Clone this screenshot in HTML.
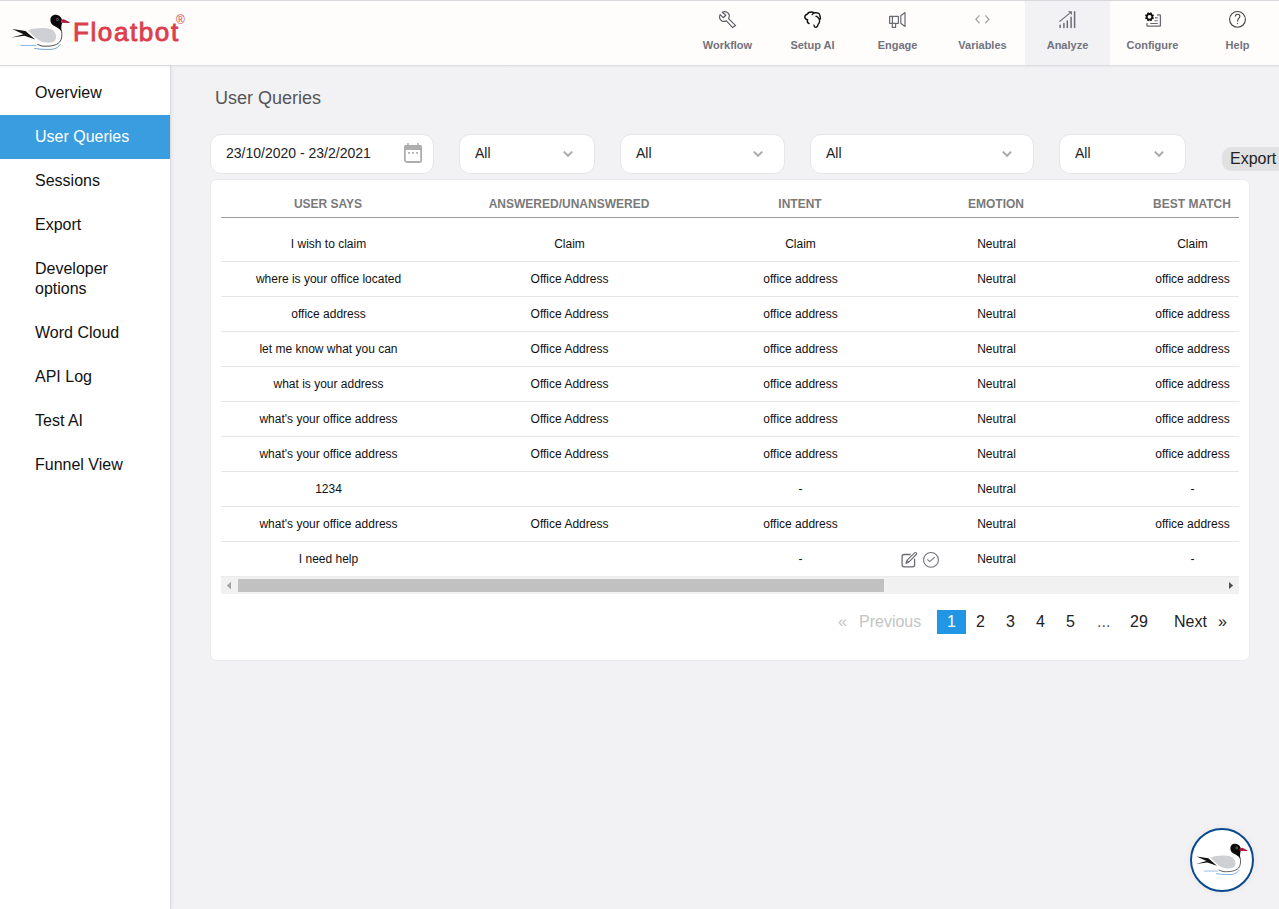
<!DOCTYPE html>
<html><head><meta charset="utf-8">
<style>
*{margin:0;padding:0;box-sizing:border-box}
html,body{width:1279px;height:909px;overflow:hidden;background:#f2f2f5;font-family:"Liberation Sans",sans-serif;color:#222}
.abs{position:absolute}
#topline{left:0;top:0;width:1279px;height:1px;background:#d8d8dc}
#header{left:0;top:1px;width:1279px;height:65px;background:#fefdfc;border-bottom:1px solid #dedee2}
#brand{left:73px;top:17px;font-size:26px;color:#dc3f4c;-webkit-text-stroke:0.9px #dc3f4c;letter-spacing:1.6px}
#reg{left:176px;top:13px;font-size:12px;color:#dc3f4c}
.nav{top:1px;width:85px;height:64px;text-align:center}
.nav.active{background:#f0f0f3}
.nav .lbl{position:absolute;left:0;right:0;top:38px;font-size:11px;font-weight:bold;color:#72727c}
.nav svg{position:absolute;left:34px;top:9px}
#sidebar{left:0;top:66px;width:171px;height:843px;background:#fff;border-right:1px solid #dcdce0;box-shadow:1px 0 3px rgba(0,0,0,0.05);padding-top:1px}
.si{position:absolute;left:0;width:170px;height:44px;font-size:16px;color:#111;padding-left:35px;line-height:44px}
.si.active{background:#3a9de0;color:#fff}
#title{left:215px;top:88px;font-size:18px;color:#555}
.box{position:absolute;top:134px;height:40px;background:#fff;border:1px solid #e6e6e8;border-radius:11px;font-size:14px;color:#222;line-height:36px;padding-left:15px}
.chev{position:absolute;top:14px;width:8px;height:8px;border-right:1.5px solid #999;border-bottom:1.5px solid #999;transform:rotate(45deg)}
#export{left:1222px;top:147px;width:70px;height:24px;background:#e1e1e2;border-radius:9px;font-size:16px;line-height:23px;padding-left:8px;color:#222}
#card{left:210px;top:179px;width:1040px;height:482px;background:#fff;border:1px solid #ececee;border-radius:7px}
.th{position:absolute;top:197px;font-size:12px;font-weight:bold;color:#7a7a7a;text-align:center;width:300px}
#hline{left:221px;top:217px;width:1018px;height:1px;background:#9c9c9c}
.rl{position:absolute;left:221px;width:1018px;height:1px;background:#e6e6e6}
.td{position:absolute;font-size:12px;color:#111;text-align:center;width:300px}
#sb{left:221px;top:576px;width:1018px;height:18px;background:#f1f1f1;border-top:1px solid #ebebeb}
#thumb{left:238px;top:579px;width:646px;height:13px;background:#c1c1c1}
.pg{position:absolute;top:611px;font-size:16px;color:#222;line-height:22px}
#bubble{left:1190px;top:828px;width:64px;height:64px;border-radius:50%;border:2.5px solid #0b4a8c;background:#fff;box-shadow:0 0 8px rgba(0,0,0,0.05)}
</style></head><body>
<div id="topline" class="abs"></div>
<div id="header" class="abs"></div>
<!-- logo bird -->
<svg class="abs" style="left:0;top:0" width="80" height="60" viewBox="0 0 80 60">
<g id="bird">
  <path d="M28 30.5 C33 27.8 45 27.3 51 29.3 C56.5 31.5 57 37.5 55 40.5 C52.5 43.5 46 43 41.5 41.5 C36 39.5 31 33 28 30.5 Z" fill="#cfd0d3"/>
  <path d="M12.2 29.1 L25.5 31 L35.2 39.6 L24.5 35.8 L11.6 37.6 L23.5 34.2 Z" fill="#111"/>
  <path d="M50.4 20 C50.4 16 53.5 14.6 56 14.8 C59 15 61.2 17 62 19.5 L60.8 21.2 L62 23 C61.3 25.5 61 28 61.6 31.5 C59.5 28.5 56.5 27 53.5 25.5 C51.5 24.3 50.4 22.3 50.4 20 Z" fill="#0a0a0a"/>
  <circle cx="57.5" cy="19.5" r="1.1" fill="none" stroke="#bbb" stroke-width="0.5"/>
  <path d="M61 19.8 L63.8 19.3 L69.9 22.2 L69.2 23 L61.4 22.8 Z" fill="#b3183c"/>
  <path d="M61.2 30 C62.3 34 62.2 39 59.5 42.2 C56.5 45.6 50 46.6 42 46.1 L37.2 44.3" fill="none" stroke="#222" stroke-width="0.8"/>
  <path d="M20.6 45.5 L36.5 45.5" stroke="#6aa8dc" stroke-width="0.8"/>
  <path d="M34.3 48.3 C40 49.5 50 49.8 54 49 C57 48 59 46.2 60.5 44.2" fill="none" stroke="#5a9ad4" stroke-width="0.9"/>
</g>
</svg>
<div id="brand" class="abs">Floatbot</div>
<div id="reg" class="abs">®</div>

<svg class="abs" style="left:0;top:0" width="1279" height="66" viewBox="0 0 1279 66">
  <rect x="1025" y="1" width="85" height="64" fill="#f2f2f5"/>
  <path d="M722.2 12.3 L725.8 15.2 L723.2 17.7 L720.2 14.6 C719 17 719.8 19.5 721.5 20.7 C723 21.6 725 21.5 726.2 20.7 L732.6 27.6 L735.6 25.6 L728.6 18.6 C729.6 16.5 729.3 13.8 727.3 12.5 C725.8 11.5 723.8 11.6 722.2 12.3 Z" fill="none" stroke="#5e5f66" stroke-width="1.2" stroke-linejoin="round"/>
  <path d="M809 23.5 C807.5 23 807 21.5 807.5 19.8 C806 19.5 804.8 18.5 804.8 17 C804.8 15.5 806 14.5 807.5 14 C808 12.8 809.5 12 811.5 12 C813 12 814 12.5 815 12.8 C816.5 12.8 818.5 12.5 819.3 14 C819.8 15 819.8 16 820.3 17 C820.8 18 820.3 19.2 819.5 19.8 M812.2 14.6 C812.8 13.8 813.5 13.4 814.2 13.2 M816 16.2 C818 17 819.5 18.5 819.6 21 C819.7 22.5 819 23.5 818.2 24.2 C818 25.5 817.5 27 816 27.4 C815 27.5 814.3 26.5 814 25.3" fill="none" stroke="#111" stroke-width="1.4" stroke-linecap="round"/>
  <path d="M889.6 16.4 H898.4 V23.3 H889.6 Z M892.4 16.4 V23.3 M892.3 23.3 V27.4 H895.6 V23.3 M900.8 15.8 L905 12.6 V26.4 L900.8 23.3 Z" fill="none" stroke="#6a6a72" stroke-width="1.2" stroke-linejoin="round"/>
  <path d="M979.5 15.4 L975.9 19.3 L979.5 23.2 M985.3 15.4 L988.9 19.3 L985.3 23.2" fill="none" stroke="#a6a6a8" stroke-width="1.3"/>
  <path d="M1060.1 25.3 V27.6 M1063.9 23.6 V27.6 M1067.3 20.9 V27.6 M1071.1 17.3 V27.6 M1074.6 11.8 V27.6" stroke="#6c6c74" stroke-width="1.5" stroke-linecap="round"/>
  <path d="M1059.4 21.6 L1069.6 13.4" stroke="#6c6c74" stroke-width="1.2"/>
  <path d="M1067.8 11.2 L1071.9 11.2 L1071.9 15 Z" fill="#6c6c74"/>
  <g transform="translate(1149.5 16.8)">
    <circle r="2.8" fill="none" stroke="#111" stroke-width="1.8"/>
    <g fill="#111"><rect x="-0.9" y="-4.5" width="1.8" height="1.8" transform="rotate(22.5)"/><rect x="-0.9" y="-4.5" width="1.8" height="1.8" transform="rotate(67.5)"/><rect x="-0.9" y="-4.5" width="1.8" height="1.8" transform="rotate(112.5)"/><rect x="-0.9" y="-4.5" width="1.8" height="1.8" transform="rotate(157.5)"/><rect x="-0.9" y="-4.5" width="1.8" height="1.8" transform="rotate(202.5)"/><rect x="-0.9" y="-4.5" width="1.8" height="1.8" transform="rotate(247.5)"/><rect x="-0.9" y="-4.5" width="1.8" height="1.8" transform="rotate(292.5)"/><rect x="-0.9" y="-4.5" width="1.8" height="1.8" transform="rotate(337.5)"/></g>
  </g>
  <path d="M1147 23 V25.6 Q1147 26.2 1147.6 26.2 H1159.8 Q1160.4 26.2 1160.4 25.6 V15.4 Q1160.4 14.8 1159.8 14.8 H1157" fill="none" stroke="#6a6a70" stroke-width="1.3"/>
  <path d="M1155.1 17.9 H1157.8 M1154.5 20.8 H1157.8 M1150.2 23.5 H1157.8" stroke="#6a6a70" stroke-width="1.1"/>
  <circle cx="1237.5" cy="19.4" r="7.9" fill="none" stroke="#444" stroke-width="1.1"/>
  <path d="M1235.3 16.6 C1235.3 15 1236.3 14.2 1237.6 14.2 C1239 14.2 1239.9 15.2 1239.9 16.3 C1239.9 17.6 1238.8 18.3 1238.2 19 C1237.6 19.7 1237.5 20.3 1237.5 21.6" fill="none" stroke="#444" stroke-width="1.1"/>
  <circle cx="1237.5" cy="23.6" r="0.7" fill="#444"/>
</svg>
<div class="nav abs" style="left:685px"><div class="lbl">Workflow</div></div>
<div class="nav abs" style="left:770px"><div class="lbl">Setup AI</div></div>
<div class="nav abs" style="left:855px"><div class="lbl">Engage</div></div>
<div class="nav abs" style="left:940px"><div class="lbl">Variables</div></div>
<div class="nav abs" style="left:1025px"><div class="lbl">Analyze</div></div>
<div class="nav abs" style="left:1110px"><div class="lbl">Configure</div></div>
<div class="nav abs" style="left:1195px"><div class="lbl">Help</div></div>

<div id="sidebar" class="abs">
  <div class="si" style="top:5px">Overview</div>
  <div class="si active" style="top:49px">User Queries</div>
  <div class="si" style="top:93px">Sessions</div>
  <div class="si" style="top:137px">Export</div>
  <div class="si" style="top:181px;height:64px;line-height:20px;padding-top:12px">Developer<br>options</div>
  <div class="si" style="top:245px">Word Cloud</div>
  <div class="si" style="top:289px">API Log</div>
  <div class="si" style="top:333px">Test AI</div>
  <div class="si" style="top:377px">Funnel View</div>
</div>

<div class="abs" style="left:0;top:66px;width:1279px;height:2px;background:linear-gradient(rgba(0,0,0,0.045),rgba(0,0,0,0))"></div>
<div id="title" class="abs">User Queries</div>

<div class="box" style="left:210px;width:224px">23/10/2020 - 23/2/2021
  <svg style="position:absolute;left:193px;top:8px" width="18" height="20" viewBox="0 0 18 20"><rect x="0.9" y="2.9" width="16.2" height="16.1" rx="1.8" fill="none" stroke="#aeaeae" stroke-width="1.8"/><rect x="0" y="2" width="18" height="5" rx="1.5" fill="#aeaeae"/><rect x="3.2" y="0" width="1.6" height="3" fill="#aeaeae"/><rect x="13.2" y="0" width="1.6" height="3" fill="#aeaeae"/><rect x="4.1" y="9" width="1.8" height="1.8" fill="#aeaeae"/><rect x="8.1" y="9" width="1.8" height="1.8" fill="#aeaeae"/><rect x="12.1" y="9" width="1.8" height="1.8" fill="#aeaeae"/></svg>
</div>
<div class="box" style="left:459px;width:136px">All<svg style="position:absolute;right:20px;top:15px" width="12" height="8" viewBox="0 0 12 8"><polyline points="1.8,1.6 6,5.8 10.2,1.6" fill="none" stroke="#ababab" stroke-width="2"/></svg></div>
<div class="box" style="left:620px;width:165px">All<svg style="position:absolute;right:20px;top:15px" width="12" height="8" viewBox="0 0 12 8"><polyline points="1.8,1.6 6,5.8 10.2,1.6" fill="none" stroke="#ababab" stroke-width="2"/></svg></div>
<div class="box" style="left:810px;width:224px">All<svg style="position:absolute;right:20px;top:15px" width="12" height="8" viewBox="0 0 12 8"><polyline points="1.8,1.6 6,5.8 10.2,1.6" fill="none" stroke="#ababab" stroke-width="2"/></svg></div>
<div class="box" style="left:1059px;width:127px">All<svg style="position:absolute;right:20px;top:15px" width="12" height="8" viewBox="0 0 12 8"><polyline points="1.8,1.6 6,5.8 10.2,1.6" fill="none" stroke="#ababab" stroke-width="2"/></svg></div>
<div id="export" class="abs">Export</div>

<div id="card" class="abs"></div>
<div class="th" style="left:178px">USER SAYS</div>
<div class="th" style="left:419px">ANSWERED/UNANSWERED</div>
<div class="th" style="left:650px">INTENT</div>
<div class="th" style="left:846px">EMOTION</div>
<div class="th" style="left:1042px">BEST MATCH</div>
<div id="hline" class="abs"></div>

<!--ROWS-->
<div class="td" style="left:178.5px;top:237px">I wish to claim</div>
<div class="td" style="left:419.5px;top:237px">Claim</div>
<div class="td" style="left:650.5px;top:237px">Claim</div>
<div class="td" style="left:846.5px;top:237px">Neutral</div>
<div class="td" style="left:1042.5px;top:237px">Claim</div>
<div class="rl" style="top:261px"></div>
<div class="td" style="left:178.5px;top:272px">where is your office located</div>
<div class="td" style="left:419.5px;top:272px">Office Address</div>
<div class="td" style="left:650.5px;top:272px">office address</div>
<div class="td" style="left:846.5px;top:272px">Neutral</div>
<div class="td" style="left:1042.5px;top:272px">office address</div>
<div class="rl" style="top:296px"></div>
<div class="td" style="left:178.5px;top:307px">office address</div>
<div class="td" style="left:419.5px;top:307px">Office Address</div>
<div class="td" style="left:650.5px;top:307px">office address</div>
<div class="td" style="left:846.5px;top:307px">Neutral</div>
<div class="td" style="left:1042.5px;top:307px">office address</div>
<div class="rl" style="top:331px"></div>
<div class="td" style="left:178.5px;top:342px">let me know what you can</div>
<div class="td" style="left:419.5px;top:342px">Office Address</div>
<div class="td" style="left:650.5px;top:342px">office address</div>
<div class="td" style="left:846.5px;top:342px">Neutral</div>
<div class="td" style="left:1042.5px;top:342px">office address</div>
<div class="rl" style="top:366px"></div>
<div class="td" style="left:178.5px;top:377px">what is your address</div>
<div class="td" style="left:419.5px;top:377px">Office Address</div>
<div class="td" style="left:650.5px;top:377px">office address</div>
<div class="td" style="left:846.5px;top:377px">Neutral</div>
<div class="td" style="left:1042.5px;top:377px">office address</div>
<div class="rl" style="top:401px"></div>
<div class="td" style="left:178.5px;top:412px">what's your office address</div>
<div class="td" style="left:419.5px;top:412px">Office Address</div>
<div class="td" style="left:650.5px;top:412px">office address</div>
<div class="td" style="left:846.5px;top:412px">Neutral</div>
<div class="td" style="left:1042.5px;top:412px">office address</div>
<div class="rl" style="top:436px"></div>
<div class="td" style="left:178.5px;top:447px">what's your office address</div>
<div class="td" style="left:419.5px;top:447px">Office Address</div>
<div class="td" style="left:650.5px;top:447px">office address</div>
<div class="td" style="left:846.5px;top:447px">Neutral</div>
<div class="td" style="left:1042.5px;top:447px">office address</div>
<div class="rl" style="top:471px"></div>
<div class="td" style="left:178.5px;top:482px">1234</div>
<div class="td" style="left:650.5px;top:482px">-</div>
<div class="td" style="left:846.5px;top:482px">Neutral</div>
<div class="td" style="left:1042.5px;top:482px">-</div>
<div class="rl" style="top:506px"></div>
<div class="td" style="left:178.5px;top:517px">what's your office address</div>
<div class="td" style="left:419.5px;top:517px">Office Address</div>
<div class="td" style="left:650.5px;top:517px">office address</div>
<div class="td" style="left:846.5px;top:517px">Neutral</div>
<div class="td" style="left:1042.5px;top:517px">office address</div>
<div class="rl" style="top:541px"></div>
<div class="td" style="left:178.5px;top:552px">I need help</div>
<div class="td" style="left:650.5px;top:552px">-</div>
<div class="td" style="left:846.5px;top:552px">Neutral</div>
<div class="td" style="left:1042.5px;top:552px">-</div>
<!--ROWSEND-->
<svg class="abs" style="left:890px;top:545px" width="60" height="30" viewBox="890 545 60 30">
  <path d="M910.6 554.5 H904.1 Q902.1 554.5 902.1 556.5 V564.8 Q902.1 566.8 904.1 566.8 H912.6 Q914.6 566.8 914.6 564.8 V558.7" fill="none" stroke="#6a6a72" stroke-width="1.3"/>
  <path d="M906 563.6 L906.9 560.4 L914.6 552.9 Q915.5 552.1 916.3 552.9 Q917 553.7 916.2 554.5 L908.6 562.3 Z M906.9 560.4 L908.6 562.3" fill="none" stroke="#6a6a72" stroke-width="1.1" stroke-linejoin="round"/>
  <circle cx="931" cy="559.9" r="7.4" fill="none" stroke="#707078" stroke-width="1.1"/>
  <path d="M927.3 559.3 L929.8 561.6 L934.7 557.1" fill="none" stroke="#707078" stroke-width="1.1"/>
</svg>

<div id="sb" class="abs"></div>
<div id="thumb" class="abs"></div>
<svg class="abs" style="left:226px;top:581px" width="6" height="9" viewBox="0 0 6 9"><path d="M5 0.7 L0.8 4.6 L5 8.4 Z" fill="#a3a3a3"/></svg>
<svg class="abs" style="left:1228px;top:581px" width="6" height="9" viewBox="0 0 6 9"><path d="M1 1 L5.2 4.5 L1 8 Z" fill="#505050"/></svg>

<div class="pg" style="left:838px;color:#c4c4c4">«</div>
<div class="pg" style="left:859px;color:#c4c4c4">Previous</div>
<div class="pg" style="left:937px;top:610px;width:29px;height:24px;background:#2196e5;color:#fff;text-align:center;line-height:24px">1</div>
<div class="pg" style="left:976px">2</div>
<div class="pg" style="left:1006px">3</div>
<div class="pg" style="left:1036px">4</div>
<div class="pg" style="left:1066px">5</div>
<div class="pg" style="left:1097px;color:#555">...</div>
<div class="pg" style="left:1130px">29</div>
<div class="pg" style="left:1174px">Next</div>
<div class="pg" style="left:1218px">»</div>

<div id="bubble" class="abs"></div>
<svg class="abs" style="left:1180px;top:820px" width="90" height="80" viewBox="1180 820 90 80"><use href="#bird" transform="translate(1185.7 830.7) scale(0.887)"/></svg>
</body></html>
